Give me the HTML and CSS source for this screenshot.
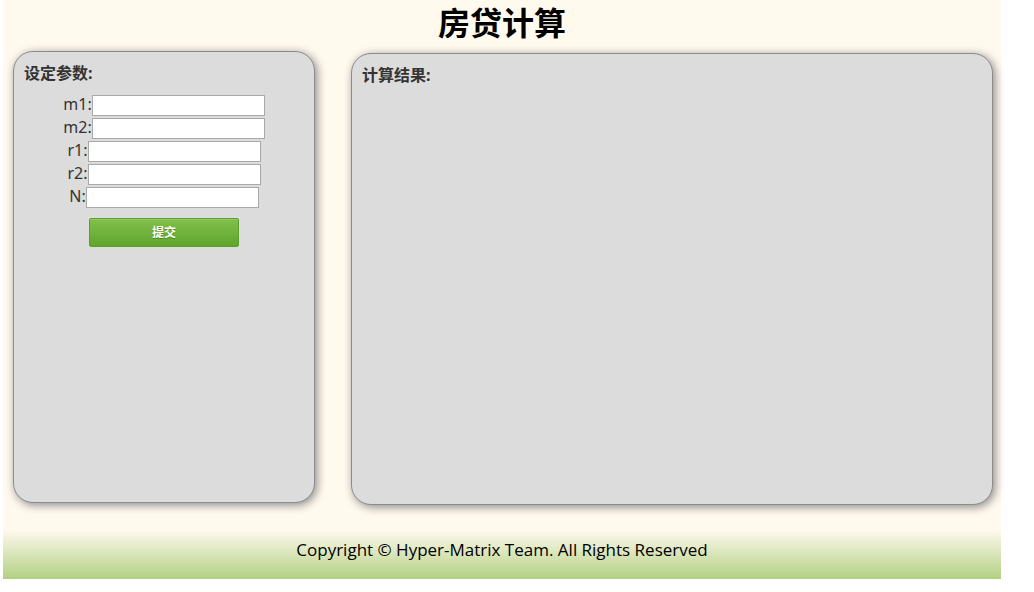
FILE: index.html
```html
<!DOCTYPE html>
<html lang="zh-CN">
<head>
<meta charset="utf-8">
<title>房贷计算</title>
<link rel="stylesheet" href="styles.css">
</head>
<body>
<div class="page">
  <h1 class="title">房贷计算</h1>
  <main class="content">
    <section class="panel params">
      <h2 class="panel-title">设定参数:</h2>
      <form class="form">
        <div class="row"><label for="m1">m1:</label><input class="field" id="m1" type="text"></div>
        <div class="row"><label for="m2">m2:</label><input class="field" id="m2" type="text"></div>
        <div class="row"><label for="r1">r1:</label><input class="field" id="r1" type="text"></div>
        <div class="row"><label for="r2">r2:</label><input class="field" id="r2" type="text"></div>
        <div class="row"><label for="n">N:</label><input class="field" id="n" type="text"></div>
        <button class="submit" type="button">提交</button>
      </form>
    </section>
    <section class="panel result">
      <h2 class="panel-title">计算结果:</h2>
    </section>
  </main>
  <footer class="footer">Copyright © Hyper-Matrix Team. All Rights Reserved</footer>
</div>
</body>
</html>
```
FILE: styles.css
```css
* {
  box-sizing: border-box;
}

body {
  margin: 0;
  background: #fff;
  color: #000;
  font-family: "Noto Sans", "Noto Sans CJK SC", sans-serif;
  font-size: 16px;
}

.page {
  margin: 0 33px 0 3px;
  background: #fff9ee;
}

.title {
  margin: 0;
  font-family: "Noto Sans CJK SC", sans-serif;
  font-size: 32px;
  line-height: 43px;
  text-align: center;
}

.content {
  display: flex;
  align-items: flex-start;
  gap: 36px;
  padding: 8px 8px 25px 10px;
}

.panel {
  min-height: 452px;
  padding: 10px;
  border: 1px solid #8c8c8c;
  border-radius: 20px;
  background: #dcdcdc;
  box-shadow: 2px 2px 10px #888;
  color: #333;
}

.params {
  flex: 0 0 302px;
}

.result {
  flex: 1;
  margin-top: 2px;
}

.panel-title {
  margin: 0;
  font-size: 16px;
  line-height: 22px;
}

.form {
  display: flex;
  flex-direction: column;
  align-items: center;
  padding-top: 10px;
}

.row {
  display: flex;
  height: 23px;
  line-height: 21px;
}

.field {
  width: 173px;
  height: 21px;
  margin: 1px 0;
  padding: 1px 2px;
  border: 1px solid #a9a9a9;
  background: #fff;
  font: inherit;
  font-size: 13px;
}

.submit {
  width: 150px;
  height: 29px;
  margin-top: 9px;
  padding: 0 0 2px;
  border: 1px solid #5ca029;
  border-radius: 2px;
  background: linear-gradient(#80c04b, #61a52d);
  box-shadow: inset 0 1px 0 #92cb65;
  color: #fff;
  font-family: "Noto Sans CJK SC", sans-serif;
  font-size: 12px;
  font-weight: 700;
  text-shadow: 0 1px 0 #4a8a1c;
}

.footer {
  padding: 8px 0 17px;
  background: linear-gradient(#fff9ee, #b2d082);
  font-family: "Open Sans", sans-serif;
  font-size: 17px;
  line-height: 24px;
  text-align: center;
}
```
